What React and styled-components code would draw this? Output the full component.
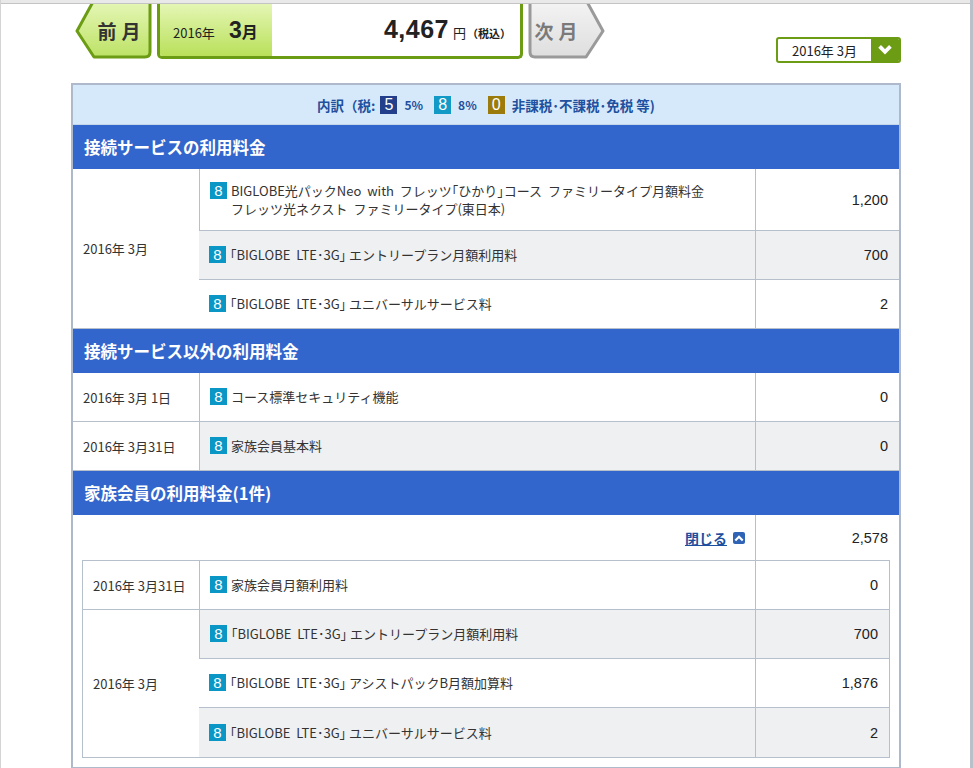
import React from 'react'
import styled, { createGlobalStyle } from 'styled-components'

const GlobalStyle = createGlobalStyle`
  body {
    margin: 0;
    background: #fff;
    font-family: "Noto Sans CJK JP", "Liberation Sans", sans-serif;
    font-size: 13px;
    color: #333;
  }
`

const GREEN = '#6c9c14'
const LINE = '#b6c0cc'
const ZEBRA = '#eff0f2'

const Frame = styled.div`
  width: 973px;
  height: 768px;
  overflow: hidden;
  border-left: 1px solid #d4d4d4;
  border-right: 3px solid #b9c0c8;
  box-sizing: border-box;
`
const TopBand = styled.div`
  height: 3px;
  background: #e9e9e9;
  border-bottom: 1px solid #c4c4c4;
`
const Content = styled.div`
  padding: 0 69px 0 70px;
`
const Header = styled.div`
  display: flex;
  align-items: flex-start;
  height: 79px;
`
const Nav = styled.div`
  display: flex;
  gap: 5px;
  margin-left: 4px;
`
const ArrowBtn = styled.div`
  position: relative;
  width: 77px;
  height: 55px;
  display: flex;
  align-items: center;
  justify-content: center;
  padding: ${p => (p.$dir === 'left' ? '0 0 0 16px' : '0 16px 0 0')};
  box-sizing: border-box;
  font-size: 19px;
  font-weight: bold;
  letter-spacing: 5px;
  color: ${p => (p.$dir === 'left' ? '#333' : '#7a7a7a')};
  cursor: pointer;
  svg {
    position: absolute;
    left: 0;
    top: 0;
  }
  span {
    position: relative;
    margin-top: -3px;
  }
`
const MonthBox = styled.div`
  width: 366px;
  height: 55px;
  box-sizing: border-box;
  border: 3px solid ${GREEN};
  border-top: none;
  border-radius: 0 0 5px 5px;
  display: flex;
  overflow: hidden;
`
const MonthLabel = styled.div`
  width: 112px;
  background: linear-gradient(#e4f6b4, #b9e05a);
  display: flex;
  align-items: baseline;
  padding: 13px 0 0 13px;
  box-sizing: border-box;
  font-size: 13px;
  color: #222;
  b {
    font-family: "Liberation Sans", sans-serif;
    font-size: 23px;
    margin-left: 14px;
  }
  em {
    font-style: normal;
    font-weight: bold;
    font-size: 16px;
  }
`
const Total = styled.div`
  flex: 1;
  display: flex;
  align-items: baseline;
  justify-content: flex-end;
  padding: 11px 9px 0 0;
  color: #222;
  b {
    font-family: "Liberation Sans", sans-serif;
    font-size: 25px;
    margin-right: 4px;
    letter-spacing: 0.5px;
  }
  small {
    font-size: 11px;
    font-weight: bold;
    margin-left: 1px;
  }
`
const Select = styled.div`
  margin: 33px 0 0 auto;
  width: 125px;
  height: 26px;
  box-sizing: border-box;
  border: 2px solid ${GREEN};
  border-radius: 3px;
  display: flex;
  overflow: hidden;
`
const SelectText = styled.div`
  flex: 1;
  display: flex;
  align-items: center;
  justify-content: center;
  font-size: 13px;
  color: #222;
`
const SelectBtn = styled.div`
  width: 28px;
  background: ${GREEN};
  display: flex;
  align-items: center;
  justify-content: center;
`

const Panel = styled.div`
  border: 2px solid #aebacb;
`
const Legend = styled.div`
  height: 39px;
  background: #d6e9fb;
  display: flex;
  align-items: center;
  justify-content: center;
  gap: 5px;
  font-size: 13.5px;
  font-weight: bold;
  color: #21509e;
  border-bottom: 1px solid #c6d6ea;
`
const Pct = styled.span`
  font-size: 12px;
  margin-right: 6px;
`
const TaxTag = styled.span`
  display: inline-flex;
  align-items: center;
  justify-content: center;
  width: ${p => p.$w || 17}px;
  height: ${p => p.$w || 18}px;
  background: ${p => p.$bg};
  color: #fff;
  font-family: "Liberation Sans", sans-serif;
  font-weight: normal;
  font-size: ${p => p.$size || 16}px;
  line-height: 1;
  margin-right: ${p => p.$gap || 2}px;
  flex-shrink: 0;
`
const SectionTitle = styled.div`
  height: 44px;
  background: #3366cc;
  color: #fff;
  font-size: 16.5px;
  font-weight: bold;
  display: flex;
  align-items: center;
  padding-left: 11px;
`
const Table = styled.table`
  width: 100%;
  border-collapse: separate;
  border-spacing: 0;
  table-layout: fixed;
  ${p => p.$nested && `border: 1px solid ${LINE};`}
`
const Td = styled.td`
  box-sizing: border-box;
  border-bottom: ${p => (p.$open ? 'none' : `1px solid ${LINE}`)};
  border-left: 1px solid ${LINE};
  height: ${p => p.$h || 49}px;
  padding: 0 10px;
  background: ${p => (p.$zebra ? ZEBRA : '#fff')};
  vertical-align: middle;
  font-size: 13px;
  color: #333;
  text-align: ${p => (p.$right ? 'right' : 'left')};
  &:first-child {
    border-left: none;
  }
`
const DateTd = styled(Td)`
  background: #fff;
  white-space: nowrap;
`
const AmountTd = styled(Td)`
  text-align: right;
  padding-right: 11px;
  font-family: "Liberation Sans", sans-serif;
  font-size: 14.5px;
  color: #222;
`
const Desc = styled.div`
  display: flex;
  align-items: flex-start;
  line-height: 18px;
`
const CloseLink = styled.a`
  display: inline-flex;
  align-items: center;
  gap: 6px;
  color: #1d4f9e;
  font-size: 14px;
  font-weight: bold;
  text-decoration: underline;
  cursor: pointer;
`
const CloseIcon = styled.span`
  width: 12px;
  height: 12px;
  border-radius: 2px;
  background: #2f63b6;
  display: inline-flex;
  align-items: center;
  justify-content: center;
`
const NestedWrap = styled.td`
  padding: 0 9px 9px 9px;
`

const LeftShape = () => (
  <svg width="77" height="55" viewBox="0 0 77 55">
    <defs>
      <linearGradient id="gl" x1="0" y1="0" x2="0" y2="1">
        <stop offset="0" stopColor="#e6f7b8" />
        <stop offset="1" stopColor="#bde266" />
      </linearGradient>
    </defs>
    <path d="M19 -4 L2 27 L19 53 L70 53 Q75 53 75 48 L75 -4 Z" fill="url(#gl)" stroke={GREEN} strokeWidth="3" strokeLinejoin="round" />
  </svg>
)
const RightShape = () => (
  <svg width="77" height="55" viewBox="0 0 77 55">
    <defs>
      <linearGradient id="gr" x1="0" y1="0" x2="0" y2="1">
        <stop offset="0" stopColor="#f4f4f4" />
        <stop offset="1" stopColor="#dedede" />
      </linearGradient>
    </defs>
    <path d="M58 -4 L75 27 L58 53 L7 53 Q2 53 2 48 L2 -4 Z" fill="url(#gr)" stroke="#9a9a9a" strokeWidth="3" strokeLinejoin="round" />
  </svg>
)

const Chevron = ({ up, size = 12, w = 3 }) => (
  <svg width={size} height={size} viewBox="0 0 12 12">
    <path d={up ? 'M2.5 8 L6 4.5 L9.5 8' : 'M2.5 4 L6 7.5 L9.5 4'} fill="none" stroke="#fff" strokeWidth={w} strokeLinecap="square" />
  </svg>
)

const Eight = () => <TaxTag $bg="#0b97c6" $w={17} $size={15} $gap={4}>8</TaxTag>

const Item = ({ children }) => (
  <Desc>
    <Eight />
    <div>{children}</div>
  </Desc>
)

const Cols = ({ date }) => (
  <colgroup>
    <col style={{ width: date }} />
    <col style={{ width: 556 }} />
    <col />
  </colgroup>
)

export default function App() {
  return (
    <Frame>
      <GlobalStyle />
      <TopBand />
      <Content>
        <Header>
          <Nav>
            <ArrowBtn $dir="left">
              <LeftShape />
              <span>前月</span>
            </ArrowBtn>
            <MonthBox>
              <MonthLabel>
                2016年<b>3</b><em>月</em>
              </MonthLabel>
              <Total>
                <b>4,467</b>円<small>（税込）</small>
              </Total>
            </MonthBox>
            <ArrowBtn $dir="right">
              <RightShape />
              <span>次月</span>
            </ArrowBtn>
          </Nav>
          <Select>
            <SelectText>2016年 3月</SelectText>
            <SelectBtn>
              <Chevron size={14} w={3.2} />
            </SelectBtn>
          </Select>
        </Header>

        <Panel>
          <Legend>
            <span>内訳（税:</span>
            <TaxTag $bg="#233f8b">5</TaxTag>
            <Pct>5%</Pct>
            <TaxTag $bg="#1399c6">8</TaxTag>
            <Pct>8%</Pct>
            <TaxTag $bg="#9b7b0c">0</TaxTag>
            <span>非課税･不課税･免税 等)</span>
          </Legend>

          <SectionTitle>接続サービスの利用料金</SectionTitle>
          <Table>
            <Cols date={126} />
            <tbody>
              <tr>
                <DateTd rowSpan={3}>2016年 3月</DateTd>
                <Td $h={62}>
                  <Item>
                    BIGLOBE光パックNeo&nbsp; with&nbsp; フレッツ｢ひかり｣コース&nbsp; ファミリータイプ月額料金
                    <br />
                    フレッツ光ネクスト&nbsp; ファミリータイプ(東日本)
                  </Item>
                </Td>
                <AmountTd $h={62}>1,200</AmountTd>
              </tr>
              <tr>
                <Td $zebra>
                  <Item>｢BIGLOBE&nbsp; LTE･3G｣ エントリープラン月額利用料</Item>
                </Td>
                <AmountTd $zebra>700</AmountTd>
              </tr>
              <tr>
                <Td>
                  <Item>｢BIGLOBE&nbsp; LTE･3G｣ ユニバーサルサービス料</Item>
                </Td>
                <AmountTd>2</AmountTd>
              </tr>
            </tbody>
          </Table>

          <SectionTitle>接続サービス以外の利用料金</SectionTitle>
          <Table>
            <Cols date={126} />
            <tbody>
              <tr>
                <DateTd>2016年 3月 1日</DateTd>
                <Td>
                  <Item>コース標準セキュリティ機能</Item>
                </Td>
                <AmountTd>0</AmountTd>
              </tr>
              <tr>
                <DateTd>2016年 3月31日</DateTd>
                <Td $zebra>
                  <Item>家族会員基本料</Item>
                </Td>
                <AmountTd $zebra>0</AmountTd>
              </tr>
            </tbody>
          </Table>

          <SectionTitle>家族会員の利用料金(1件)</SectionTitle>
          <Table>
            <Cols date={126} />
            <tbody>
              <tr>
                <Td colSpan={2} $h={45} $right $open>
                  <CloseLink>
                    閉じる
                    <CloseIcon>
                      <Chevron up size={10} w={2.6} />
                    </CloseIcon>
                  </CloseLink>
                </Td>
                <AmountTd $h={45} $open>2,578</AmountTd>
              </tr>
              <tr>
                <NestedWrap colSpan={3}>
                  <Table $nested>
                    <Cols date={116} />
                    <tbody>
                      <tr>
                        <DateTd>2016年 3月31日</DateTd>
                        <Td>
                          <Item>家族会員月額利用料</Item>
                        </Td>
                        <AmountTd>0</AmountTd>
                      </tr>
                      <tr>
                        <DateTd rowSpan={3} $open>2016年 3月</DateTd>
                        <Td $zebra>
                          <Item>｢BIGLOBE&nbsp; LTE･3G｣ エントリープラン月額利用料</Item>
                        </Td>
                        <AmountTd $zebra>700</AmountTd>
                      </tr>
                      <tr>
                        <Td>
                          <Item>｢BIGLOBE&nbsp; LTE･3G｣ アシストパックB月額加算料</Item>
                        </Td>
                        <AmountTd>1,876</AmountTd>
                      </tr>
                      <tr>
                        <Td $zebra $open>
                          <Item>｢BIGLOBE&nbsp; LTE･3G｣ ユニバーサルサービス料</Item>
                        </Td>
                        <AmountTd $zebra $open>2</AmountTd>
                      </tr>
                    </tbody>
                  </Table>
                </NestedWrap>
              </tr>
            </tbody>
          </Table>
        </Panel>
      </Content>
    </Frame>
  )
}
